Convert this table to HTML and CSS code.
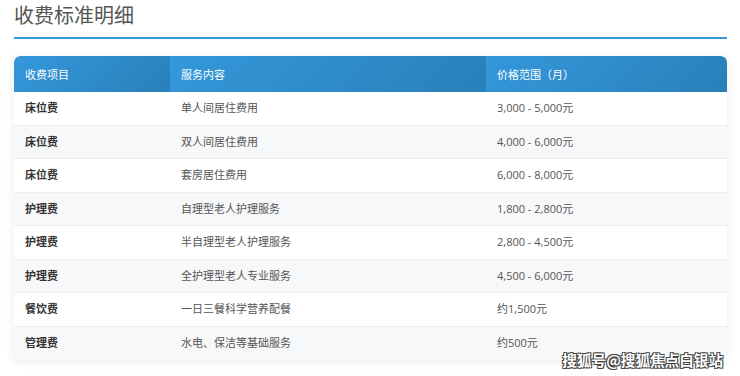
FILE: index.html
```html
<!DOCTYPE html>
<html>
  <head>
    <meta charset="UTF-8" />
    <meta name="viewport" content="width=device-width, initial-scale=1.0" />
    <title>收费标准明细</title>
    <link rel="stylesheet" href="styles.css">
  </head>

  <body>
    <div class="page">
      <h2 class="title">收费标准明细</h2>

      <table class="fees">
        <thead>
          <tr>
            <th class="c1">收费项目</th>
            <th class="c2">服务内容</th>
            <th class="c3">价格范围（月）</th>
          </tr>
        </thead>
        <tbody>
          <tr><td class="item">床位费</td><td>单人间居住费用</td><td>3,000 - 5,000元</td></tr>
          <tr><td class="item">床位费</td><td>双人间居住费用</td><td>4,000 - 6,000元</td></tr>
          <tr><td class="item">床位费</td><td>套房居住费用</td><td>6,000 - 8,000元</td></tr>
          <tr><td class="item">护理费</td><td>自理型老人护理服务</td><td>1,800 - 2,800元</td></tr>
          <tr><td class="item">护理费</td><td>半自理型老人护理服务</td><td>2,800 - 4,500元</td></tr>
          <tr><td class="item">护理费</td><td>全护理型老人专业服务</td><td>4,500 - 6,000元</td></tr>
          <tr><td class="item">餐饮费</td><td>一日三餐科学营养配餐</td><td>约1,500元</td></tr>
          <tr><td class="item">管理费</td><td>水电、保洁等基础服务</td><td>约500元</td></tr>
        </tbody>
      </table>
    </div>

    <div class="watermark">搜狐号@搜狐焦点白银站</div>
  </body>
</html>
```

FILE: styles.css
```css
* {
  padding: 0px;
  margin: 0px;
  box-sizing: border-box;
}

body {
  width: 740px;
  height: 376px;
  overflow: hidden;
  background: #ffffff;
  font-family: "Open Sans", "Noto Sans CJK SC", sans-serif;
  color: #555;
  position: relative;
}

.page {
  padding: 0 13px 0 14px;
}

.title {
  font-size: 20px;
  font-weight: normal;
  color: #555;
  line-height: 28px;
  padding-top: 2px;
  padding-bottom: 7px;
  border-bottom: 2px solid #3498db;
}

.fees {
  width: 100%;
  margin-top: 17px;
  border-collapse: separate;
  border-spacing: 0;
  border-radius: 6px 6px 0 0;
  overflow: hidden;
  box-shadow: 0 2px 10px rgba(0, 0, 0, 0.08);
  font-size: 11px;
}

.fees th {
  background: linear-gradient(135deg, #3498db, #2980b9);
  color: #fff;
  font-weight: normal;
  text-align: left;
  height: 36px;
  padding: 0 11px;
}

.fees th.c1 {
  width: 156px;
  border-top-left-radius: 6px;
}

.fees th.c2 {
  width: 316px;
}

.fees th.c3 {
  border-top-right-radius: 6px;
}

.fees td {
  padding: 8px 11px;
  height: 33.5px;
  line-height: 16.5px;
  border-bottom: 1px solid #eceef1;
  color: #555;
}

.fees td.item {
  font-weight: bold;
  color: #333;
}

.fees tbody tr:nth-child(even) td {
  background: #f7f8fa;
}

.fees tbody tr:last-child td {
  border-bottom: none;
}

.watermark {
  position: absolute;
  right: 17px;
  bottom: 6px;
  font-family: "Noto Sans CJK SC", sans-serif;
  font-size: 14.6px;
  font-weight: bold;
  color: #fff;
  text-shadow: -1px -1px 0 #444, 1px -1px 0 #444, -1px 1px 0 #444, 1px 1px 0 #444;
}
```
